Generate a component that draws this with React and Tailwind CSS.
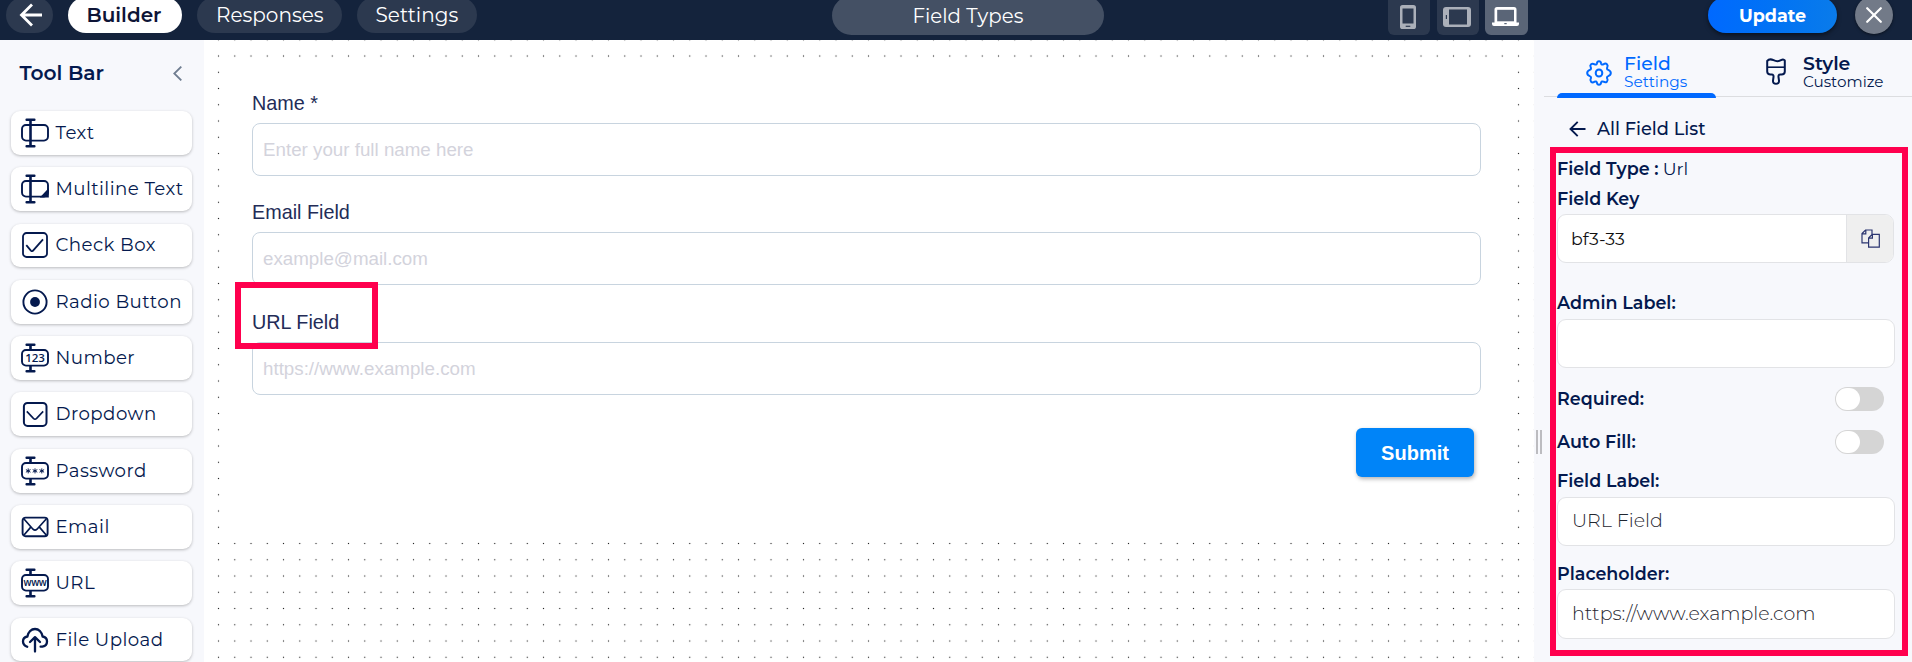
import React from "react";

const INK = "#04194e";

/* ---------- icons ---------- */

function FieldFrame({ children, bar = true }) {
  return (
    <svg width="28" height="30" viewBox="0 0 28 30" fill="none" stroke={INK} strokeWidth="1.9">
      {bar ? (
        <path d="M9.5 1.8V28" strokeWidth="2.6" />
      ) : (
        <path d="M9.5 1.8V7M9.5 23V28" strokeWidth="2.6" />
      )}
      <path d="M5.6 1.7h7.8M5.6 28.3h7.8" strokeWidth="2.4" strokeLinecap="round" />
      <rect x="1" y="7" width="26" height="15.6" rx="4" />
      {children}
    </svg>
  );
}

function FrameText({ size, spacing, y, children }) {
  return (
    <text
      x="14"
      y={y}
      fill={INK}
      stroke="none"
      fontSize={size}
      fontWeight="600"
      letterSpacing={spacing}
      textAnchor="middle"
      fontFamily="Open Sans, Inter, sans-serif"
    >
      {children}
    </text>
  );
}

const icons = {
  text: <FieldFrame />,
  multiline: (
    <FieldFrame>
      <path d="M27.8 14v9.4h-9Z" fill={INK} stroke="none" />
    </FieldFrame>
  ),
  check: (
    <svg width="28" height="28" viewBox="0 0 28 28" fill="none" stroke={INK} strokeWidth="1.8">
      <rect x="2" y="2" width="24" height="24" rx="3.6" />
      <path d="M5.3 14.2l4.6 5.4q1.3 1.3 2.4-.2L22 8.3" />
    </svg>
  ),
  radio: (
    <svg width="28" height="28" viewBox="0 0 28 28" fill="none" stroke={INK} strokeWidth="1.9">
      <circle cx="14" cy="14" r="11.6" />
      <circle cx="14" cy="14" r="4.9" fill={INK} stroke="none" />
    </svg>
  ),
  number: (
    <FieldFrame bar={false}>
      <FrameText size="11.5" spacing="0" y="19">123</FrameText>
    </FieldFrame>
  ),
  dropdown: (
    <svg width="28" height="28" viewBox="0 0 28 28" fill="none" stroke={INK} strokeWidth="1.9">
      <rect x="2.9" y="2.9" width="22.6" height="23" rx="3.6" strokeWidth="2" />
      <path d="M5.8 11.4l6.6 7q1.6 1.6 3.2 0l6.6-7" strokeWidth="1.6" />
    </svg>
  ),
  password: (
    <FieldFrame bar={false}>
      <path
        d="M7.2 12.4v5M4.9 13.6l4.6 2.6M9.5 13.6l-4.6 2.6M14 12.4v5M11.7 13.6l4.6 2.6M16.3 13.6l-4.6 2.6M20.8 12.4v5M18.5 13.6l4.6 2.6M23.1 13.6l-4.6 2.6"
        strokeWidth="1"
      />
    </FieldFrame>
  ),
  email: (
    <svg width="28" height="22" viewBox="0 0 28 22" fill="none" stroke={INK} strokeWidth="1.9">
      <rect x="1.6" y="1.6" width="25" height="18.6" rx="3" />
      <path d="M3 3l9 10.2q2 2 4 0L25.2 3M3 19l6.6-7.6M25.2 19l-6.6-7.6" strokeWidth="1.7" />
    </svg>
  ),
  url: (
    <FieldFrame bar={false}>
      <FrameText size="9.8" spacing="-0.3" y="17.6">www</FrameText>
    </FieldFrame>
  ),
  upload: (
    <svg width="28" height="26" viewBox="0 0 28 26" fill="none" stroke={INK} strokeWidth="2.3" strokeLinecap="round" strokeLinejoin="round">
      <path d="M6.2 19.8C3.6 18.6 2 16.8 2 14.4c0-2.7 2-4.5 4.4-4.9C7.2 5 10.3 2 14 2s6.8 3 7.6 7.5c2.4.4 4.4 2.2 4.4 4.9 0 2.6-1.8 4.6-4.6 5.3h-1.8" />
      <path d="M14 24.5V10.5M9 15l5-4.9 5 4.9" />
    </svg>
  ),
};

function Gear() {
  return (
    <svg width="26" height="26" viewBox="0 0 26 26" fill="none" stroke="#0069ff" strokeWidth="2" strokeLinejoin="round">
      <path d="M10.9 3.4Q11.2 1.2 13 1.2T15.1 3.4Q15.6 5.2 17.4 4.3Q19.6 2.9 20.9 4.3T21.3 7.2Q20.4 9.3 22.2 9.9Q24.8 10.9 24.8 13T22.2 16.1Q20.4 16.7 21.3 18.8Q22.3 20.4 20.9 21.7T17.4 21.7Q15.6 20.8 15.1 22.6Q14.8 24.8 13 24.8T10.9 22.6Q10.4 20.8 8.6 21.7Q6.4 23.1 5.1 21.7T4.7 18.8Q5.6 16.7 3.8 16.1Q1.2 15.1 1.2 13T3.8 9.9Q5.6 9.3 4.7 7.2Q3.7 5.6 5.1 4.3T8.6 4.3Q10.4 5.2 10.9 3.4Z" />
      <ellipse cx="13" cy="13" rx="3.3" ry="3.5" />
    </svg>
  );
}

function Brush() {
  return (
    <svg width="20" height="27" viewBox="0 0 20 27" fill="none" stroke={INK} strokeWidth="2" strokeLinejoin="round">
      <path d="M1.2 3C3 .8 5.5 1.2 7.5 2.2S13 3.4 15 2.2 18.8 1.8 18.8 2.6V13.5C18.8 15.5 17.5 16.6 15.5 16.6H14.3C12.7 16.6 12.3 17.6 12.5 19L13 22.6C13.2 24.6 12 25.8 10 25.8S6.8 24.6 7 22.6L7.5 19C7.7 17.6 7.3 16.6 5.7 16.6H4.5C2.5 16.6 1.2 15.5 1.2 13.5Z" />
      <path d="M1.2 9.2H18.8" strokeWidth="1.6" />
    </svg>
  );
}

/* ---------- header ---------- */

function Header() {
  return (
    <header className="flex h-10 items-start overflow-hidden bg-[#14233c] text-[20px] text-white">
      <div className="flex w-[832px] shrink-0 items-start">
        <button className="-mt-[3px] ml-[6px] flex h-9 w-[47px] items-center justify-center rounded-full bg-[#2c394f] pl-[3px]">
          <svg width="24" height="24" viewBox="0 0 24 24" fill="none" stroke="#fff" strokeWidth="2.8">
            <path d="M23 12H3M13 1.5L2.5 12l10.5 10.5" />
          </svg>
        </button>
        <button className="-mt-[3px] ml-[15px] h-9 w-[114px] rounded-full bg-white pl-[18.5px] text-left leading-[37px] font-semibold text-[#0e1537]">
          Builder
        </button>
        <button className="-mt-[3px] ml-[15px] h-9 w-[145px] rounded-full bg-[#2c394f] pl-[19px] text-left leading-[36px]">
          Responses
        </button>
        <button className="-mt-[3px] ml-[15px] h-9 w-[120px] rounded-full bg-[#2c394f] pl-[18.5px] text-left leading-[36px]">
          Settings
        </button>
      </div>
      <div className="-mt-1 h-[39px] w-[272px] shrink-0 rounded-full bg-[#445064] pl-[80.5px] text-[19.8px] leading-[40px]">
        Field Types
      </div>
      <div className="ml-[284px] flex items-start">
        <button className="-mt-[6px] flex h-[41px] w-[42px] items-center justify-center rounded-md bg-[#2c394f] pt-[4px] pr-[2px]">
          <svg width="16" height="24" viewBox="0 0 16 24">
            <rect width="16" height="24" rx="2.6" fill="#abb0b9" />
            <rect x="2.5" y="3.5" width="11" height="15" fill="#2c394f" />
            <rect x="5.7" y="20.7" width="4.6" height="1.2" fill="#2c394f" />
          </svg>
        </button>
        <button className="-mt-[6px] ml-[7px] flex h-[41px] w-[42px] items-center justify-center rounded-md bg-[#2c394f] pt-[4px] pr-[2px]">
          <svg width="28" height="20" viewBox="0 0 28 20">
            <rect width="28" height="20" rx="3" fill="#abb0b9" />
            <rect x="6" y="2.5" width="18" height="15" fill="#2c394f" />
            <rect x="2.8" y="8" width="1.2" height="4" fill="#2c394f" />
          </svg>
        </button>
        <button className="-mt-[6px] ml-[6px] flex h-[41px] w-[43px] items-center justify-center rounded-md bg-[#5a6577] pt-[3px] pr-[2px]">
          <svg width="27" height="19" viewBox="0 0 27 19">
            <path d="M5 0h17a2.5 2.5 0 0 1 2.5 2.5V15.5H27V17a2 2 0 0 1-2 2H2a2 2 0 0 1-2-2v-1.5h2.5V2.5A2.5 2.5 0 0 1 5 0z" fill="#fff" />
            <rect x="5.2" y="2.8" width="16.8" height="11.5" fill="#5a6577" />
            <rect x="12.3" y="16" width="2.4" height="1.2" fill="#5a6577" />
          </svg>
        </button>
        <button className="-mt-[3px] ml-[180px] h-9 w-[129px] rounded-full bg-gradient-to-r from-[#0069ff] to-[#0a7bea] pl-[31px] text-left text-[17.5px] leading-[37px] font-bold shadow-[0_2px_4px_rgba(0,0,0,0.5)]">
          Update
        </button>
        <button className="-mt-1 ml-[18px] flex h-[38px] w-[38px] items-center justify-center rounded-full bg-[#727a88] shadow-[0_1px_3px_rgba(0,0,0,0.5)]">
          <svg width="16" height="16" viewBox="0 0 16 16" stroke="#fff" strokeWidth="2.2" strokeLinecap="round">
            <path d="M1.2 1.2l13.6 13.6M14.8 1.2L1.2 14.8" />
          </svg>
        </button>
      </div>
    </header>
  );
}

/* ---------- left tool bar ---------- */

const tools = [
  ["text", "Text"],
  ["multiline", "Multiline Text"],
  ["check", "Check Box"],
  ["radio", "Radio Button"],
  ["number", "Number"],
  ["dropdown", "Dropdown"],
  ["password", "Password"],
  ["email", "Email"],
  ["url", "URL"],
  ["upload", "File Upload"],
];

function ToolBar() {
  return (
    <aside className="w-[204px] shrink-0 overflow-hidden bg-[#f7f8fc] text-[#04194e]">
      <div className="mt-[21px] flex h-6 items-center justify-between pr-[22px] pl-[19.5px]">
        <span className="text-[20.2px] font-semibold">Tool Bar</span>
        <svg width="9" height="15" viewBox="0 0 9 15" fill="none" stroke="#6f7d90" strokeWidth="1.8">
          <path d="M8.3 .6L1.3 7.5l7 6.9" />
        </svg>
      </div>
      <div className="mt-[26px] flex flex-col gap-[12.5px] pl-[11px]">
        {tools.map(([icon, name]) => (
          <div
            key={name}
            className="flex h-[43.8px] w-[181px] items-center rounded-[9px] bg-white pl-[10px] shadow-[0_1px_3px_rgba(0,0,0,0.25)]"
          >
            <span className="flex w-7 shrink-0 justify-center">{icons[icon]}</span>
            <span className="ml-[6.5px] text-[18.2px] leading-6 tracking-[0.45px] whitespace-nowrap">{name}</span>
          </div>
        ))}
      </div>
    </aside>
  );
}

/* ---------- form canvas ---------- */

function FormField({ label, placeholder }) {
  return (
    <div className="mb-[23.3px]">
      <div className="h-6 text-[19.8px] leading-[27px] text-[#232c57]">{label}</div>
      <div className="mt-[9px] flex h-[53px] items-center rounded-lg border border-[#c8d4df] bg-white pt-[1px] pl-[10px] text-[18.75px] text-[#d3d3dc]">
        {placeholder}
      </div>
    </div>
  );
}

function Canvas() {
  return (
    <main className="w-[1330px] shrink-0 overflow-hidden bg-white bg-[radial-gradient(circle_at_center,#222_0.5px,transparent_1px)] bg-[length:16.25px_16.25px] bg-[position:6.4px_7.9px]">
      <div className="mt-[18px] ml-5 h-[480px] w-[1288px] bg-white pt-8 pr-[31px] pl-7 font-['Liberation_Sans',Arial,sans-serif]">
        <FormField label="Name *" placeholder="Enter your full name here" />
        <FormField label="Email Field" placeholder="example@mail.com" />
        <FormField label="URL Field" placeholder="https://www.example.com" />
        <div className="mt-[33px] flex justify-end pr-[7px]">
          <button className="h-[49px] w-[118px] rounded-md bg-[#0084f8] text-[20px] leading-[50px] font-bold text-white shadow-[1px_2px_4px_rgba(0,0,0,0.3)]">
            Submit
          </button>
        </div>
      </div>
    </main>
  );
}

/* ---------- right settings panel ---------- */

function Toggle() {
  return (
    <span className="flex h-6 w-[49px] items-center rounded-full bg-[#d5d5d5] pl-px">
      <span className="h-[22px] w-6 rounded-full bg-white" />
    </span>
  );
}

function Panel() {
  return (
    <aside className="flex w-[378px] shrink-0 overflow-hidden bg-[#f7f8fc] text-[#04194e]">
      <div className="flex w-[10px] shrink-0 gap-[2px] pt-[390px] pl-[2px]">
        <span className="h-6 w-[2px] bg-[#bcbcc0]" />
        <span className="h-6 w-[2px] bg-[#bcbcc0]" />
      </div>
      <div className="w-[368px] shrink-0">
        <div className="flex h-[57px] border-b border-[#dcdde0]">
          <div className="ml-[13px] flex h-[58px] w-[159px] flex-col justify-between">
            <div className="flex h-[50px] pl-[29px] text-[#0069ff]">
              <span className="mt-[19.5px]"><Gear /></span>
              <div className="mt-[12.5px] ml-[12px]">
                <div className="text-[18.8px] leading-[22px] font-medium">Field</div>
                <div className="text-[15.3px] leading-[13px]">Settings</div>
              </div>
            </div>
            <div className="h-[5px] shrink-0 rounded-t-md bg-[#0069ff]" />
          </div>
          <div className="ml-[50px] flex">
            <span className="mt-[18px]"><Brush /></span>
            <div className="mt-[12.5px] ml-[17px]">
              <div className="text-[18.9px] leading-[22px] font-semibold">Style</div>
              <div className="text-[15.2px] leading-[13px]">Customize</div>
            </div>
          </div>
        </div>
        <div className="mt-[20px] flex h-6 items-center pl-[25px]">
          <svg width="17" height="16" viewBox="0 0 17 16" fill="none" stroke={INK} strokeWidth="1.9">
            <path d="M16.5 8H1.5M8.7 .8L1.5 8l7.2 7.2" />
          </svg>
          <span className="ml-[11px] text-[17.8px] font-medium">All Field List</span>
        </div>

        <div className="pr-[17px] pl-[13px] text-[17.5px] font-semibold">
          <div className="mt-[15.5px] h-6 leading-6">
            <span>Field Type :</span>
            <span className="ml-[4px] font-normal">Url</span>
          </div>
          <div className="mt-[6px] h-6 leading-6">Field Key</div>
          <div className="mt-[3.5px] flex h-[49px] w-[337px] overflow-hidden rounded-[9px] border border-[#e2e3e6] bg-white">
            <div className="flex w-[288px] items-center pt-[1px] pl-[13px] text-[17.4px] font-normal text-[#111]">bf3-33</div>
            <div className="flex flex-1 items-center justify-center border-l border-[#e2e3e6] bg-[#efefef]">
              <svg width="19" height="19" viewBox="0 0 19 19" fill="none" stroke="#2b3570" strokeWidth="1.2">
                <path d="M7.2 13.8H1V4.5L4.5 1H11V5.2M4.8 1v3.8H1" />
                <path d="M7.6 9L11.2 5.4H18.3V18.2H7.6ZM11.4 5.4V9.2H7.6" />
              </svg>
            </div>
          </div>
          <div className="mt-[27.5px] h-6 leading-6">Admin Label:</div>
          <div className="mt-[4.5px] h-[49px] w-[338px] rounded-[9px] border border-[#e2e3e6] bg-white" />
          <div className="mt-[19px] flex h-6 w-[327px] items-center justify-between">
            Required:
            <Toggle />
          </div>
          <div className="mt-[19px] flex h-6 w-[327px] items-center justify-between">
            Auto Fill:
            <Toggle />
          </div>
          <div className="mt-[14px] h-6 leading-[25px]">Field Label:</div>
          <div className="mt-[5px] flex h-[49px] w-[338px] items-center rounded-[9px] border border-[#e2e3e6] bg-white pl-[14px] text-[19px] font-light text-[#1f2630]">
            <span className="-mt-px">URL Field</span>
          </div>
          <div className="mt-[15px] h-6 leading-[25px]">Placeholder:</div>
          <div className="mt-[4px] flex h-[50px] w-[338px] items-center rounded-[9px] border border-[#e2e3e6] bg-white pl-[14px] text-[19px] font-light text-[#1f2630]">
            https://www.example.com
          </div>
        </div>
      </div>
    </aside>
  );
}

export default function App() {
  return (
    <div className="relative h-[662px] w-[1912px] overflow-hidden bg-white font-[Montserrat,Inter,sans-serif]">
      <Header />
      <div className="flex h-[622px]">
        <ToolBar />
        <Canvas />
        <Panel />
      </div>
      <div className="absolute top-[282px] left-[235px] h-[67px] w-[143px] border-[6px] border-[#ff004e]" />
      <div className="absolute top-[147px] left-[1550px] h-[509px] w-[358px] border-[6px] border-[#ff004e]" />
    </div>
  );
}
